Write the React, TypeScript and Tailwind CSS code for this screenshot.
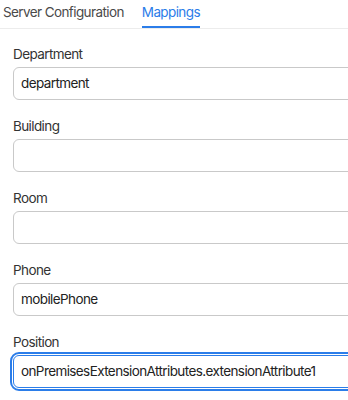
import React from "react";

const fields: { label: string; value: string; focused?: boolean }[] = [
  { label: "Department", value: "department" },
  { label: "Building", value: "" },
  { label: "Room", value: "" },
  { label: "Phone", value: "mobilePhone" },
  { label: "Position", value: "onPremisesExtensionAttributes.extensionAttribute1", focused: true },
];

export default function App() {
  return (
    <div
      className="w-[348px] h-[400px] overflow-hidden bg-white text-[13.5px] tracking-[-0.6px]"
      style={{ fontFamily: "Inter, 'Noto Sans', sans-serif" }}
    >
      <div className="flex gap-[18px] pl-[3px] border-b border-[#ececec] h-[29px]">
        <div className="h-full flex items-start pt-[2px] text-[#4a4a4a] leading-[20px]">Server Configuration</div>
        <div className="flex items-start pt-[2px] text-[#2b7de9] leading-[20px] border-b-2 border-[#2b7de9] h-[28px]">Mappings</div>
      </div>
      <div className="pl-[13px] pt-[15px] flex flex-col gap-[16px]">
        {fields.map((f) => (
          <div key={f.label} className="flex flex-col gap-[3px]">
            <div className="leading-[20px] text-[#333333]">{f.label}</div>
            <div
              className={
                f.focused
                  ? "w-[400px] h-[33px] rounded-[6px] border border-[#2b7de9] outline-2 outline-solid outline-offset-1 outline-[#2b7de9] flex items-center pl-[7px] text-[#222222]"
                  : "w-[400px] h-[33px] rounded-[6px] border border-[#c9c9c9] flex items-center pl-[7px] text-[#222222]"
              }
            >
              {f.value}
            </div>
          </div>
        ))}
      </div>
    </div>
  );
}
